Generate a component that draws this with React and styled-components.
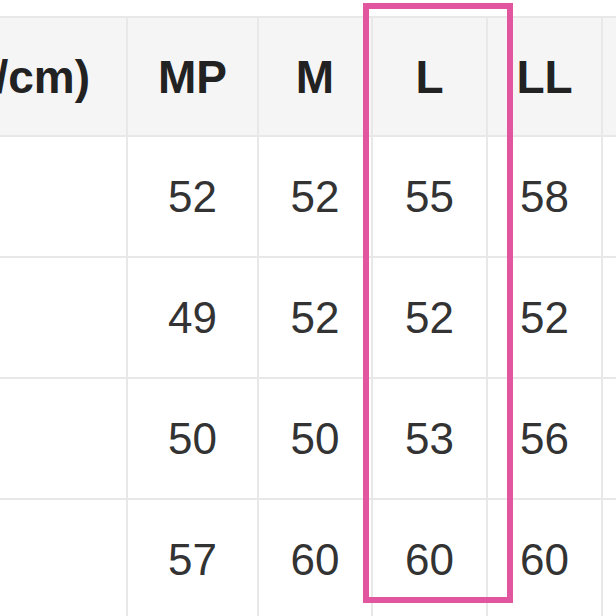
/** node modules */
import styled, { createGlobalStyle } from "styled-components";

/** data */
const sizes = ["MP", "M", "L", "LL", ""];
const rows = [
  ["52", "52", "55", "58", ""],
  ["49", "52", "52", "52", ""],
  ["50", "50", "53", "56", ""],
  ["57", "60", "60", "60", ""],
];

/** global styles */
const GlobalStyle = createGlobalStyle`
  html, body {
    margin: 0;
    padding: 0;
    width: 616px;
    height: 616px;
    overflow: hidden;
    background: #ffffff;
  }
  body {
    font-family: "Liberation Sans", Arial, "Noto Sans CJK JP", sans-serif;
  }
`;

/** inline styles */
const Page = styled.div`
  position: relative;
  width: 616px;
  height: 616px;
  padding-top: 16px;
  box-sizing: border-box;
`;

const Table = styled.div`
  display: grid;
  grid-template-columns: 126px 129px 112px 113px 113px 40px;
  grid-template-rows: 117px repeat(4, 119px);
  gap: 2px;
  padding-top: 2px;
  background: #e8e8e8;
  width: max-content;
`;

const HeadCell = styled.div`
  display: flex;
  align-items: center;
  justify-content: ${({ $align }) => ($align === "right" ? "flex-end" : "center")};
  padding-right: ${({ $align }) => ($align === "right" ? "36px" : "0")};
  background: #f5f5f5;
  color: #222222;
  font-size: 46px;
  font-weight: 700;
  white-space: nowrap;
  overflow: visible;
`;

const Cell = styled.div`
  display: flex;
  align-items: center;
  justify-content: center;
  background: #ffffff;
  color: #333333;
  font-size: 44px;
  font-weight: 400;
`;

const Highlight = styled.div`
  position: absolute;
  left: 363px;
  top: 3px;
  width: 150px;
  height: 600px;
  box-sizing: border-box;
  border: 6px solid #e2559f;
  pointer-events: none;
`;

/** render element */
export default function App() {
  return (
    <>
      <GlobalStyle />
      <Page>
        <Table>
          <HeadCell $align="right">(/cm)</HeadCell>
          {sizes.map((size, i) => (
            <HeadCell key={`h-${i}`}>{size}</HeadCell>
          ))}
          {rows.map((row, r) => (
            <>
              <Cell key={`l-${r}`} />
              {row.map((value, c) => (
                <Cell key={`c-${r}-${c}`}>{value}</Cell>
              ))}
            </>
          ))}
        </Table>
        <Highlight />
      </Page>
    </>
  );
}
